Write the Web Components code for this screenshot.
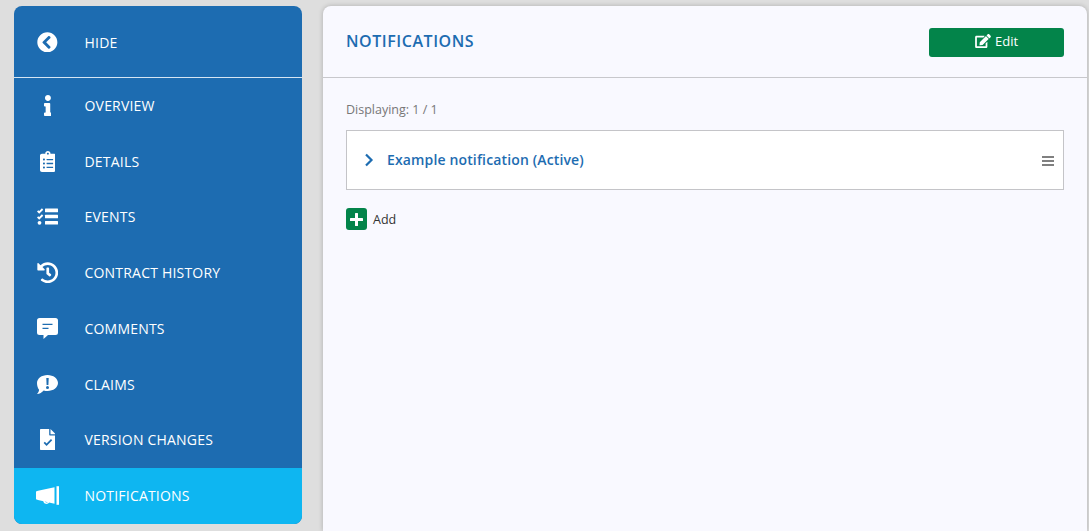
<!DOCTYPE html>
<html><head><meta charset="utf-8"><style>
html,body{margin:0;height:100%;overflow:hidden}
body{background:#dedede;font-family:"Open Sans",sans-serif}
</style></head><body>
<app-shell>
<side-nav slot="nav">
<nav-item label="HIDE" icon="hide" head></nav-item>
<nav-item label="OVERVIEW" icon="info"></nav-item>
<nav-item label="DETAILS" icon="clip"></nav-item>
<nav-item label="EVENTS" icon="tasks"></nav-item>
<nav-item label="CONTRACT HISTORY" icon="history"></nav-item>
<nav-item label="COMMENTS" icon="comment"></nav-item>
<nav-item label="CLAIMS" icon="claim"></nav-item>
<nav-item label="VERSION CHANGES" icon="file"></nav-item>
<nav-item label="NOTIFICATIONS" icon="horn" active></nav-item>
</side-nav>
<main-card slot="main"></main-card>
</app-shell>
<script>
const ICONS={
hide:['0 0 512 512',20.700,'<path d="M256 504C119 504 8 393 8 256S119 8 256 8s248 111 248 248-111 248-248 248zM142.100 273l135.500 135.500c9.400 9.400 24.600 9.400 33.900 0l17-17c9.400-9.400 9.400-24.600 0-33.900L226.900 256l101.600-101.600c9.400-9.400 9.400-24.600 0-33.900l-17-17c-9.400-9.400-24.600-9.400-33.900 0L142.100 239c-9.400 9.400-9.400 24.600 0 34z"/>'],
info:['0 0 192 512',21,'<path d="M20 424.229h20V279.771H20c-11.046 0-20-8.954-20-20V212c0-11.046 8.954-20 20-20h112c11.046 0 20 8.954 20 20v212.229h20c11.046 0 20 8.954 20 20V492c0 11.046-8.954 20-20 20H20c-11.046 0-20-8.954-20-20v-47.771c0-11.046 8.954-20 20-20zM96 0C56.235 0 24 32.235 24 72s32.235 72 72 72 72-32.235 72-72S135.764 0 96 0z"/>'],
clip:['0 0 384 512',21,'<path d="M336 64h-80c0-35.300-28.700-64-64-64s-64 28.700-64 64H48C21.500 64 0 85.500 0 112v352c0 26.500 21.500 48 48 48h288c26.500 0 48-21.500 48-48V112c0-26.500-21.500-48-48-48zM96 424c-13.300 0-24-10.700-24-24s10.700-24 24-24 24 10.700 24 24-10.700 24-24 24zm0-96c-13.300 0-24-10.700-24-24s10.700-24 24-24 24 10.700 24 24-10.700 24-24 24zm0-96c-13.300 0-24-10.700-24-24s10.700-24 24-24 24 10.700 24 24-10.700 24-24 24zm96-192c13.300 0 24 10.700 24 24s-10.700 24-24 24-24-10.700-24-24 10.700-24 24-24zm128 368c0 4.400-3.600 8-8 8H168c-4.400 0-8-3.600-8-8v-16c0-4.400 3.600-8 8-8h144c4.400 0 8 3.600 8 8v16zm0-96c0 4.400-3.600 8-8 8H168c-4.400 0-8-3.600-8-8v-16c0-4.400 3.600-8 8-8h144c4.400 0 8 3.600 8 8v16zm0-96c0 4.400-3.600 8-8 8H168c-4.400 0-8-3.600-8-8v-16c0-4.400 3.600-8 8-8h144c4.400 0 8 3.600 8 8v16z"/>'],
tasks:['0 0 21 17',17,'<path d="M.6 2.800 2.200 4.400 5.600 1M.6 8.800 2.200 10.400 5.600 7" fill="none" stroke="currentColor" stroke-width="1.900"/><circle cx="2.500" cy="14.800" r="1.900"/><rect x="8" y=".6" width="13" height="3.600" rx=".5"/><rect x="8" y="6.700" width="13" height="3.600" rx=".5"/><rect x="8" y="12.900" width="13" height="3.600" rx=".5"/>'],
history:['0 0 512 512',21.500,'<path d="M504 255.531c.253 136.640-111.180 248.372-247.820 248.468-59.015.042-113.223-20.530-155.822-54.911-11.077-8.940-11.905-25.541-1.839-35.607l11.267-11.267c8.609-8.609 22.353-9.551 31.891-1.984C173.062 425.135 212.781 440 256 440c101.705 0 184-82.311 184-184 0-101.705-82.311-184-184-184-48.814 0-93.149 18.969-126.068 49.932l50.754 50.754c10.080 10.080 2.941 27.314-11.313 27.314H24c-8.837 0-16-7.163-16-16V38.627c0-14.254 17.234-21.393 27.314-11.314l49.372 49.372C129.209 34.136 189.552 8 256 8c136.810 0 247.747 110.780 248 247.531zm-180.912 78.784l9.823-12.630c8.138-10.463 6.253-25.542-4.210-33.679L288 256.349V152c0-13.255-10.745-24-24-24h-16c-13.255 0-24 10.745-24 24v135.651l65.409 50.874c10.463 8.137 25.541 6.253 33.679-4.210z"/>'],
comment:['0 0 21 21',21,'<path fill-rule="evenodd" d="M2.500 0h16A2.500 2.500 0 0 1 21 2.500v12a2.500 2.500 0 0 1-2.500 2.500H11L6.500 21v-4h-4A2.500 2.500 0 0 1 0 14.500v-12A2.500 2.500 0 0 1 2.500 0zM5.500 5.800v1.300h10V5.800zM5.500 9.800v1.300h6V9.800z"/>'],
claim:['0 0 21 19',19,'<path fill-rule="evenodd" d="M10.500 0C16.300 0 21 3.600 21 8S16.300 16 10.500 16c-1.300 0-2.600-.2-3.800-.6C5 17.200 2.700 18.800 0 19c1.200-1.300 2-2.900 2.100-4.300C.8 13.300 0 10.800 0 8 0 3.600 4.700 0 10.500 0zM9.300 3l.3 7h1.800l.3-7zM10.500 10.900a1.500 1.500 0 1 0 0 3 1.500 1.500 0 0 0 0-3z"/>'],
file:['0 0 384 512',21,'<path fill-rule="evenodd" d="M224 0v136c0 13.200 10.800 24 24 24h136v328c0 13.300-10.700 24-24 24H24c-13.300 0-24-10.700-24-24V24C0 10.700 10.700 0 24 0zM256 0l128 128H256zM160 412l-72-72 30-30 42 42 108-108 30 30z"/>'],
horn:['0 0 23 19',19,'<path d="M0 5.500 2 4.800 18.500 1.200v16.600L2 14 0 13.300z"/><path d="M20.500 .2h2.500v18.600h-2.500z"/><path d="M8 14.500a2.600 2.600 0 0 0 5 1.100" fill="none" stroke="currentColor" stroke-width="1.300"/>']
};
function svg(k){const [vb,h,body]=ICONS[k];return `<svg viewBox="${vb}" height="${h}" fill="currentColor" aria-hidden="true">${body}</svg>`}
class NavItem extends HTMLElement{constructor(){super();const s=this.attachShadow({mode:'open'});
s.innerHTML=`<style>
:host{display:flex;align-items:center;flex:1 1 0;min-height:0;color:#fff;font-size:14px;letter-spacing:.2px;padding-bottom:1px}
:host([head]){flex:0 0 71px;box-sizing:border-box;height:72px;flex-basis:72px;padding:1px 0 0;border-bottom:1px solid #d5e5f3}
:host([active]){background:#0eb6f1}
.i{flex:0 0 67px;margin-right:3.500px;display:flex;justify-content:center;align-items:center;height:24px}
.i svg{display:block}
span{white-space:nowrap}
</style><div class="i">${svg(this.getAttribute('icon'))}</div><span>${this.getAttribute('label')}</span>`}}
class SideNav extends HTMLElement{constructor(){super();this.attachShadow({mode:'open'}).innerHTML=`<style>
:host{display:flex;flex-direction:column;width:288px;height:518px;background:#1d6cb1;border-radius:8px;overflow:hidden;flex:none}
</style><slot></slot>`}}
class MainCard extends HTMLElement{constructor(){super();this.attachShadow({mode:'open'}).innerHTML=`<style>
:host{display:flex;flex-direction:column;flex:1;min-width:0;background:#f9f9ff;border-radius:8px 8px 0 0;box-shadow:0 0 5px rgba(0,0,0,.22);color:#333}
header{height:71px;display:flex;align-items:center;justify-content:space-between;padding:0 23px;border-bottom:1px solid #c8c8cc}
h1{margin:0 0 1px;font-size:16px;font-weight:600;color:#1d6cb1;letter-spacing:.55px}
.edit{width:135px;height:29px;margin-top:1px;box-sizing:border-box;background:#03844a;color:#fff;border:0;border-radius:3px;display:flex;align-items:center;justify-content:center;gap:4px;font:13px "Open Sans",sans-serif;padding:0 0 2px}
.body{padding:23px 23px}
.count{font-size:12.500px;color:#777;line-height:17px;margin-bottom:12px}
.row{height:58px;background:#fff;border:1px solid #c4c4c8;display:flex;align-items:center;padding:0 9px 0 17px}
.row b{font-size:14px;font-weight:600;color:#1d6cb1;margin:0 0 1px 13px;flex:1;letter-spacing:.14px}
.ham{margin-top:2px}
.add{display:flex;align-items:center;gap:6px;font-size:12.500px;color:#333;margin-top:18px}
.plus{width:21px;height:22px;background:#03844a;border-radius:3px;display:flex;align-items:center;justify-content:center}
</style>
<header><h1>NOTIFICATIONS</h1><button class="edit"><svg viewBox="0 0 576 512" height="14" width="16" fill="currentColor"><path d="M402.600 83.200l90.200 90.200c3.800 3.800 3.800 10 0 13.800L274.400 405.600l-92.800 10.300c-12.400 1.400-22.900-9.100-21.500-21.500l10.300-92.800L388.800 83.200c3.800-3.800 10-3.800 13.800 0zm162-22.900l-48.800-48.800c-15.200-15.200-39.900-15.200-55.200 0l-35.400 35.400c-3.800 3.800-3.800 10 0 13.800l90.200 90.200c3.800 3.800 10 3.800 13.800 0l35.400-35.400c15.200-15.300 15.200-40 0-55.200zM384 346.200V448H64V128h229.800c3.200 0 6.200-1.300 8.500-3.500l40-40c7.600-7.600 2.200-20.500-8.500-20.500H48C21.500 64 0 85.500 0 112v352c0 26.500 21.500 48 48 48h352c26.500 0 48-21.500 48-48V306.200c0-10.700-12.900-16-20.500-8.500l-40 40c-2.200 2.300-3.500 5.300-3.500 8.500z"/></svg>Edit</button></header>
<div class="body"><div class="count">Displaying: 1 / 1</div>
<div class="row"><svg width="10" height="14" viewBox="0 0 10 14" fill="none" stroke="#1d6cb1" stroke-width="2.200"><path d="M2 1.500 7.500 7 2 12.500"/></svg><b>Example notification (Active)</b>
<svg class="ham" width="12" height="10" viewBox="0 0 12 10" fill="#808080"><rect y="0" width="12" height="2"/><rect y="4" width="12" height="2"/><rect y="8" width="12" height="2"/></svg></div>
<div class="add"><span class="plus"><svg width="13" height="13" viewBox="0 0 13 13" fill="#fff"><rect x="5" y="0" width="3" height="13" rx=".5"/><rect x="0" y="5" width="13" height="3" rx=".5"/></svg></span>Add</div></div>`}}
class AppShell extends HTMLElement{constructor(){super();this.attachShadow({mode:'open'}).innerHTML=`<style>
:host{display:flex;gap:21px;padding:6px 2px 0 14px;height:531px;box-sizing:border-box;align-items:flex-start}
::slotted([slot=main]){align-self:stretch}
</style><slot name="nav"></slot><slot name="main"></slot>`}}
customElements.define('nav-item',NavItem);customElements.define('side-nav',SideNav);customElements.define('main-card',MainCard);customElements.define('app-shell',AppShell);
</script></body></html>
